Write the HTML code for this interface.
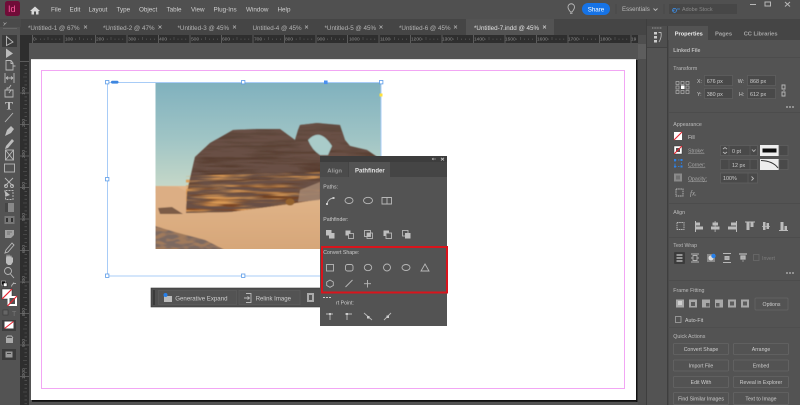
<!DOCTYPE html>
<html><head><meta charset="utf-8"><style>
html,body{margin:0;padding:0;width:800px;height:405px;overflow:hidden;background:#535353}
svg{display:block}
text{font-family:"Liberation Sans",sans-serif;font-size:5.2px;fill:#cdcdcd}
.m{font-size:6.3px;fill:#cfcfcf}
.t{font-size:6.25px;fill:#b4b4b4}
.d{fill:#a8a8a8}.c{text-anchor:middle}
.h{fill:#bcbcbc;font-size:5.3px}
.i{fill:none;stroke:#b8b8b8;stroke-width:.9}
.f{fill:#bcbcbc;stroke:none}
.r{font-size:4.8px;fill:#858585}
.fld{fill:#484848;stroke:#5f5f5f;stroke-width:.8}
.btn{fill:#535353;stroke:#666;stroke-width:.8}
.v{font-size:5.4px}
</style></head><body>
<svg width="800" height="405" viewBox="0 0 800 405" xmlns="http://www.w3.org/2000/svg">
<defs>
<linearGradient id="sky" x1="0" y1="0" x2="0" y2="1"><stop offset="0" stop-color="#80b1be"/><stop offset=".5" stop-color="#9fc4c5"/><stop offset=".95" stop-color="#c6d8c8"/></linearGradient>
<linearGradient id="rock" x1="0" y1="0" x2="0" y2="1"><stop offset="0" stop-color="#5f4a3f"/><stop offset=".55" stop-color="#563a2c"/><stop offset="1" stop-color="#86481f"/></linearGradient>
<linearGradient id="sand" x1="0" y1="0" x2="0" y2="1"><stop offset="0" stop-color="#e2b68b"/><stop offset="1" stop-color="#d6a679"/></linearGradient>
<pattern id="tk" width="31.5" height="8" patternUnits="userSpaceOnUse" x="32"><path d="M.5 0V8" stroke="#7a7a7a" stroke-width=".6"/><path d="M4.400 6.500V8M8.300 6.500V8M12.200 6.500V8M16 5V8M20 6.500V8M23.900 6.500V8M27.800 6.500V8" stroke="#5e5e5e" stroke-width=".6"/></pattern>
<pattern id="tkv" width="9" height="31.5" patternUnits="userSpaceOnUse" y="61"><path d="M0 .5H9" stroke="#7a7a7a" stroke-width=".6"/><path d="M6.500 4.400H9M6.500 8.300H9M6.500 12.200H9M5 16H9M6.500 20H9M6.500 23.900H9M6.500 27.800H9" stroke="#5e5e5e" stroke-width=".6"/></pattern>
<filter id="b" x="-5%" y="-5%" width="110%" height="110%"><feGaussianBlur stdDeviation=".45"/></filter>
<filter id="s"><feGaussianBlur stdDeviation=".28"/></filter>
<filter id="n1" x="0" y="0" width="100%" height="100%"><feTurbulence type="fractalNoise" baseFrequency="0.02 0.33" numOctaves="3" seed="4"/><feColorMatrix values="0 0 0 0 .14 0 0 0 0 .08 0 0 0 0 .06 4 0 0 0 -1.300"/></filter>
<filter id="n2" x="0" y="0" width="100%" height="100%"><feTurbulence type="fractalNoise" baseFrequency="0.025 0.28" numOctaves="2" seed="11"/><feColorMatrix values="0 0 0 0 .72 0 0 0 0 .33 0 0 0 0 .09 0 4 0 0 -1.500"/></filter>
<filter id="n3" x="0" y="0" width="100%" height="100%"><feTurbulence type="fractalNoise" baseFrequency="0.09 0.25" numOctaves="2" seed="7"/><feColorMatrix values="0 0 0 0 .2 0 0 0 0 .14 0 0 0 0 .12 5 0 0 0 -1.900"/></filter>
<clipPath id="rc"><path d="M186 213L187 192L192 170L195 157L210 143L233 130L257 129L280 129L295 140L298 130L300 125L317 123L340 125L345 140L350 146L367 150L382 160V190L340 196L290 204L230 212Z"/></clipPath>
<clipPath id="lo"><path d="M186 213V176L320 172V198L290 204L230 212Z"/></clipPath>
<clipPath id="pb"><path d="M155 250V226L175 232L205 240L225 250Z"/></clipPath>
</defs>

<rect width="800" height="405" fill="#535353"/>
<!-- top bar -->
<rect width="800" height="19" fill="#505050"/>
<rect y="19" width="646" height="16" fill="#454545"/>
<rect y="19" x="0" width="21" height="8" fill="#4a4a4a"/>

<!-- page -->
<rect x="31" y="59" width="605" height="341" fill="#fff"/>
<rect x="636" y="60" width="1.500" height="342" fill="#111"/>
<rect x="32" y="400" width="605" height="1.800" fill="#111"/>
<rect x="31" y="59" width="605" height=".8" fill="#ddd"/>
<rect x="41.500" y="70.500" width="583" height="318" fill="none" stroke="#f2a6f4" stroke-width="1"/>

<!-- photo -->
<svg x="155.500" y="83" width="225.500" height="166" viewBox="155.500 83 225.500 166">
<rect x="155" y="83" width="227" height="110" fill="url(#sky)"/>
<g filter="url(#b)">
<rect x="155" y="186" width="227" height="64" fill="url(#sand)"/>
<path d="M155 186L178 187L187 192V214L155 212Z" fill="#dcae84"/>
<path d="M186 213L187 192L192 170L195 157L210 143L233 130L257 129L280 129L295 140L298 130L300 125L317 123L340 125L345 140L350 146L367 150L382 160V190L340 196L290 204L230 212Z" fill="url(#rock)"/>
<g clip-path="url(#lo)"><rect x="186" y="172" width="136" height="42" fill="#000" filter="url(#n2)"/></g>
<g clip-path="url(#rc)"><rect x="186" y="123" width="196" height="92" fill="#000" filter="url(#n1)"/></g>
<path d="M308 140Q320 127 332 146L328 155H320Q312 150 308 140Z" fill="#a9cbc9"/>
<path d="M300 190L320 182L320 200L298 202Z" fill="#a88a74" opacity=".8"/>
<path d="M155 250V226L175 232L205 240L225 250Z" fill="#a07a5c"/>
<g clip-path="url(#pb)"><rect x="155" y="225" width="72" height="26" fill="#000" filter="url(#n3)"/></g>
<ellipse cx="290" cy="202" rx="4.500" ry="3.500" fill="#94622f"/>
<path d="M158 208L172 207L183 214H160Z" fill="#7b5c46"/>
</g>
</svg>

<!-- frame -->
<rect x="107.500" y="82.500" width="273.500" height="193.500" fill="none" stroke="#a8ccf7" stroke-width="1"/>
<g fill="#fff" stroke="#5a9be8" stroke-width=".8">
<rect x="105.500" y="80.500" width="3.400" height="3.400"/><rect x="241.500" y="80.500" width="3.400" height="3.400"/><rect x="379.500" y="80.500" width="3.400" height="3.400"/>
<rect x="105.500" y="177.500" width="3.400" height="3.400"/><rect x="105.500" y="274" width="3.400" height="3.400"/><rect x="241.500" y="274" width="3.400" height="3.400"/>
</g>
<rect x="324" y="80.500" width="3.600" height="3.600" fill="#4a90f0"/>
<rect x="379.500" y="93.500" width="3" height="3" fill="#ffe13a"/>
<rect x="111" y="80.800" width="7.500" height="2.800" rx="1.200" fill="#3d86e0"/>

<g filter="url(#s)">
<!-- logo & menu -->
<rect x="5" y="1" width="15" height="15" rx="2.500" fill="#6f0a38"/>
<text x="8" y="12" style="font-size:9px;fill:#ff5c9f">Id</text>
<path d="M30 11L35 6.500L40 11H38.500V14.500H36V11.500H34V14.500H31.500V11Z" fill="#d8d8d8"/>
<text class="m" x="51" y="11.500">File</text><text class="m" x="69.500" y="11.500">Edit</text><text class="m" x="88.500" y="11.500">Layout</text><text class="m" x="116.500" y="11.500">Type</text><text class="m" x="139" y="11.500">Object</text><text class="m" x="166.500" y="11.500">Table</text><text class="m" x="191" y="11.500">View</text><text class="m" x="213.500" y="11.500">Plug-Ins</text><text class="m" x="246" y="11.500">Window</text><text class="m" x="277.500" y="11.500">Help</text>
<!-- right of menu -->
<path d="M570.500 12C569 10 568 9 568 7A3.200 3.200 0 0 1 574.500 7C574.500 9 573.500 10 572 12ZM570 13.300H572.500" class="i" stroke-width=".8"/>
<rect x="582" y="3" width="28" height="12" rx="6" fill="#1473e6"/>
<text x="596" y="11.500" class="c" style="fill:#fff;font-size:6.200px">Share</text>
<path d="M616 4V14M664 4V14" stroke="#444" stroke-width=".7"/>
<text x="622" y="11" style="fill:#b8b8b8;font-size:6.100px">Essentials</text>
<path d="M653.500 8.500L655.500 10.500L657.500 8.500" class="i" stroke-width=".8"/>
<rect x="669" y="4" width="68" height="10" fill="#464646"/>
<path d="M676 9A2 2 0 1 1 675.900 8.900M672.500 11.500L674.500 9.800M677 9H680" fill="none" stroke="#3d8fe8" stroke-width=".8"/>
<text x="682" y="11" style="font-size:5.400px;fill:#8a8a8a">Adobe Stock</text>
<path d="M750 4.500H756" stroke="#b8b8b8" stroke-width="1"/>
<rect x="765" y="2" width="5.500" height="4" fill="none" stroke="#b8b8b8" stroke-width="1"/>
<path d="M785 2L790 6.500M790 2L785 6.500" stroke="#b8b8b8" stroke-width="1"/>

<!-- tabs -->
<rect x="466" y="19" width="88" height="16" fill="#535353"/>
<text class="t" x="28" y="30">*Untitled-1 @ 67%</text><path d="M84 25.500L87 28.500M87 25.500L84 28.500" stroke="#bbb" stroke-width=".6"/>
<text class="t" x="103" y="30">*Untitled-2 @ 47%</text><path d="M158.500 25.500L161.500 28.500M161.500 25.500L158.500 28.500" stroke="#bbb" stroke-width=".6"/>
<text class="t" x="177.500" y="30">*Untitled-3 @ 45%</text><path d="M233 25.500L236 28.500M236 25.500L233 28.500" stroke="#bbb" stroke-width=".6"/>
<text class="t" x="252.500" y="30">Untitled-4 @ 45%</text><path d="M305 25.500L308 28.500M308 25.500L305 28.500" stroke="#bbb" stroke-width=".6"/>
<text class="t" x="324.500" y="30">*Untitled-5 @ 45%</text><path d="M379.500 25.500L382.500 28.500M382.500 25.500L379.500 28.500" stroke="#bbb" stroke-width=".6"/>
<text class="t" x="399" y="30">*Untitled-6 @ 45%</text><path d="M454 25.500L457 28.500M457 25.500L454 28.500" stroke="#bbb" stroke-width=".6"/>
<text class="t" x="474" y="30" style="fill:#e2e2e2">*Untitled-7.indd @ 45%</text><path d="M543 25.500L546 28.500M546 25.500L543 28.500" stroke="#ddd" stroke-width=".6"/>
<path d="M3.500 22.500L5 24L3.500 25.500M6.500 22.500L5 24" fill="none" stroke="#aaa" stroke-width=".6"/>
<path d="M659 22.500H664M787 22.500H793" stroke="#aaa" stroke-width=".7"/>
</g>

<!-- rulers -->
<rect x="20" y="35" width="618" height="8" fill="#2e2e2e"/>
<rect x="32" y="35" width="606" height="8" fill="url(#tk)"/>
<rect x="20" y="43" width="9" height="362" fill="#2e2e2e"/>
<rect x="20" y="61" width="9" height="344" fill="url(#tkv)"/>
<g filter="url(#s)">
<text class="r" x="33" y="40.500">0</text><text class="r" x="65" y="40.500">100</text><text class="r" x="96" y="40.500">200</text><text class="r" x="128" y="40.500">300</text><text class="r" x="159" y="40.500">400</text><text class="r" x="191" y="40.500">500</text><text class="r" x="222" y="40.500">600</text><text class="r" x="254" y="40.500">700</text><text class="r" x="285" y="40.500">800</text><text class="r" x="317" y="40.500">900</text><text class="r" x="349" y="40.500">1000</text><text class="r" x="380" y="40.500">1100</text><text class="r" x="411" y="40.500">1200</text><text class="r" x="442" y="40.500">1300</text><text class="r" x="474" y="40.500">1400</text><text class="r" x="505" y="40.500">1500</text><text class="r" x="537" y="40.500">1600</text><text class="r" x="568" y="40.500">1700</text><text class="r" x="600" y="40.500">1800</text><text class="r" x="631" y="40.500">19</text>
</g>
<rect x="638" y="35" width="8" height="370" fill="#4e4e4e"/>
<rect x="638" y="44" width="8" height="15" fill="#5d5d5d"/>

<g filter="url(#s)">
<!-- toolbar -->
<rect x="0" y="27" width="20" height="378" fill="#535353"/>
<rect x="3" y="28" width="14" height="1" fill="#666"/>
<rect x="2" y="35" width="15" height="12" fill="#3b3b3b"/>
<path d="M6.500 36.500V45.500L13 42L6.500 36.500Z" class="i"/>
<path d="M6 48.500V58L13 53.500Z" class="f"/>
<path d="M6 60.500H11L13 63V70H6ZM11 61V63.500H13M13 66H15.500" class="i"/>
<path d="M5 73V83M14 73V83M6 78H13M6 78L8 76.500M6 78L8 79.500M13 78L11 76.500M13 78L11 79.500" class="i" stroke-width=".9"/>
<path d="M5 90H13V97H5ZM7 90V88H9L11 85M9 93L11 90" class="i" stroke-width="1.400"/>
<text x="5" y="109.500" style="font-size:12px;font-weight:bold;fill:#c0c0c0;font-family:'Liberation Serif',serif">T</text>
<path d="M5 122L13 113" class="i"/>
<path d="M5 136L7 130L11 126L14 129L11 133ZM5 136L9 131" class="f"/>
<path d="M5 149L6 146L12 139L14 141L8 148Z" class="f"/>
<rect x="5.500" y="150" width="8" height="10" class="i"/><path d="M5.500 150L13.500 160M13.500 150L5.500 160" class="i" stroke-width=".7"/>
<rect x="4.500" y="164" width="10" height="8" class="i"/>
<path d="M5 178L13 186M13 178L5 186" class="i"/><circle cx="6" cy="186" r="1.500" class="i"/><circle cx="12" cy="186" r="1.500" class="i"/>
<path d="M5.500 190.500H13V199.500H5.500Z" class="i" stroke-dasharray="2 1"/><path d="M4 190L10 195L6 196.500Z" class="f"/>
<rect x="5" y="203" width="9" height="9" fill="#888"/><rect x="5" y="203" width="3" height="9" fill="#444"/>
<rect x="4.500" y="216" width="10" height="8" fill="#777"/><path d="M6 218H8V222H6ZM11 218H13V222H11Z" fill="#333"/>
<path d="M5 230H14V235L11 238H5Z" fill="#a0a0a0"/><path d="M7 232H12M7 234H10" stroke="#444" stroke-width=".6"/>
<path d="M5 253L6 250L12 243L14 245L8 252Z" class="i"/>
<path d="M6 263V258L7 254L8 257L9 254L10 257L11 255L12 258L13 257V262L11 265H8Z" class="f"/>
<circle cx="8" cy="271" r="3.500" class="i"/><path d="M10.500 274L14 278" class="i" stroke-width="1.300"/>
<rect x="1.500" y="281" width="4" height="4" fill="#111" stroke="#ccc" stroke-width=".5"/><rect x="3.500" y="283" width="3.500" height="3.500" fill="#fff" stroke="#111" stroke-width=".5"/>
<path d="M11.500 286.500Q12 283 16 283.500M14 282.500L12 285" class="i" stroke-width=".8"/>
<rect x="2" y="289" width="10" height="10" fill="#fff" stroke="#222" stroke-width=".5"/><path d="M2 299L12 289" stroke="#e8222e" stroke-width="1.200"/>
<rect x="7.500" y="296" width="9.500" height="10" fill="#fff"/><rect x="9.500" y="298" width="5.500" height="6" fill="#535353"/><path d="M7.500 306L17 296" stroke="#e8222e" stroke-width="1.200"/>
<rect x="3" y="310" width="5" height="5" fill="#666" stroke="#333" stroke-width=".5"/><text x="12" y="316" style="font-size:7px;fill:#777">T</text>
<rect x="2" y="320" width="14" height="11" fill="#3d3d3d"/><rect x="4.500" y="321.500" width="9" height="7" fill="#fff"/><path d="M4.500 328.500L13.500 321.500" stroke="#e8222e" stroke-width="1.100"/>
<rect x="6" y="338" width="7" height="5" fill="#aaa"/><path d="M6 338L7.500 336H11.500L13 338" class="i" stroke-width=".7"/>
<rect x="2" y="349" width="14" height="11" fill="#3a3a3a"/><rect x="5.500" y="351.500" width="7" height="6" fill="#999"/><rect x="7" y="353" width="4" height="1" fill="#444"/>
<!-- vertical ruler numbers -->
<text class="r" transform="rotate(-90 25 95)" x="25" y="95">100</text><text class="r" transform="rotate(-90 25 127)" x="25" y="127">200</text><text class="r" transform="rotate(-90 25 158)" x="25" y="158">300</text><text class="r" transform="rotate(-90 25 190)" x="25" y="190">400</text><text class="r" transform="rotate(-90 25 221)" x="25" y="221">500</text><text class="r" transform="rotate(-90 25 253)" x="25" y="253">600</text><text class="r" transform="rotate(-90 25 284)" x="25" y="284">700</text><text class="r" transform="rotate(-90 25 316)" x="25" y="316">800</text><text class="r" transform="rotate(-90 25 347)" x="25" y="347">900</text><text class="r" transform="rotate(-90 25 379)" x="25" y="379">1000</text>
</g>

<!-- floating context bar -->
<rect x="151" y="288" width="172" height="19" fill="#4f4f4f" stroke="#3a3a3a" stroke-width=".6"/>
<rect x="153" y="290" width="2" height="15" fill="#3a3a3a"/>
<rect x="158.500" y="290.500" width="78" height="14" fill="#535353" stroke="#5c5c5c" stroke-width=".8"/>
<rect x="239" y="290.500" width="61" height="14" fill="#535353" stroke="#5c5c5c" stroke-width=".8"/>
<g filter="url(#s)">
<rect x="164" y="296" width="8" height="6" fill="#bbb"/><circle cx="165.500" cy="295" r="2" fill="#2680eb"/>
<text x="175.300" y="300.300" style="font-size:6.100px">Generative Expand</text>
<path d="M246 293.500H251V302.500H246M244 298H249M247.500 296.500L249.500 298L247.500 299.500" class="i" stroke-width=".9"/>
<text x="255.700" y="300.300" style="font-size:6.050px">Relink Image</text>
<rect x="307" y="293" width="7" height="9" fill="#aaa"/><rect x="309" y="295" width="3" height="5" fill="#555"/>
</g>

<!-- Pathfinder panel -->
<rect x="320" y="156" width="127" height="170" fill="#535353"/>
<rect x="320" y="156" width="127" height="6.500" fill="#3d3d3d"/>
<rect x="320" y="162" width="127" height="15" fill="#454545"/>
<rect x="320" y="162" width="28" height="15" fill="#4b4b4b"/>
<rect x="349" y="162" width="41" height="15" fill="#535353"/>
<g filter="url(#s)">
<path d="M432 159H436M432 159L433.500 158M432 159L433.500 160" stroke="#bbb" stroke-width=".6"/>
<path d="M441 157.800L444 160.500M444 157.800L441 160.500" stroke="#ccc" stroke-width=".8"/>
<text x="327.300" y="172.500" style="fill:#9c9c9c;font-weight:bold;font-size:5.900px">Align</text>
<text x="355" y="172.500" style="fill:#e2e2e2;font-weight:bold;font-size:6px">Pathfinder</text>
<text x="323.300" y="188.500">Paths:</text>
<text x="323.300" y="221">Pathfinder:</text>
<text x="323.300" y="254">Convert Shape:</text>
<text x="336" y="304.500">rt Point:</text>
<!-- paths -->
<path d="M327 204Q328 199 333 198" class="i"/><rect x="326" y="203" width="2" height="2" fill="#ccc"/><rect x="332.500" y="197" width="2" height="2" fill="#ccc"/>
<ellipse cx="349" cy="200.500" rx="4" ry="3" class="i"/>
<ellipse cx="368" cy="200.500" rx="4.500" ry="3.200" class="i"/>
<path d="M382 197.500H387V204H382ZM387 197.500H391.500V204H387" class="i" stroke-width=".9"/>
<!-- pathfinder -->
<rect x="326" y="230" width="5.500" height="5.500" fill="#c0c0c0"/><rect x="329" y="233" width="5.500" height="5.500" fill="#c0c0c0"/>
<rect x="345.500" y="230.500" width="5" height="5" fill="#c0c0c0"/><rect x="348.500" y="233.500" width="5" height="5" fill="#535353" stroke="#c0c0c0" stroke-width=".8"/>
<rect x="364.500" y="230.500" width="6" height="6" class="i" stroke-width=".8"/><rect x="367" y="233" width="5.500" height="5.500" fill="none" stroke="#c0c0c0" stroke-width=".8"/><rect x="367" y="233" width="3.500" height="3.500" fill="#c0c0c0"/>
<rect x="383.500" y="230.500" width="5.500" height="5.500" fill="#c0c0c0"/><rect x="386" y="233" width="3" height="3" fill="#535353"/><rect x="386" y="233" width="5.500" height="5.500" class="i" stroke-width=".8"/>
<rect x="402.500" y="230.500" width="5.500" height="5.500" class="i" stroke-width=".8"/><rect x="405" y="233" width="5.500" height="5.500" fill="#c0c0c0"/>
<!-- convert -->
<rect x="326.500" y="264.500" width="7" height="6.500" class="i" stroke-width=".7"/>
<rect x="345.500" y="264.500" width="7.500" height="6.500" rx="2" class="i" stroke-width=".7"/>
<ellipse cx="368" cy="267.500" rx="3.700" ry="3.200" class="i" stroke-width=".7"/>
<circle cx="387" cy="267.500" r="3.500" class="i" stroke-width=".7"/>
<ellipse cx="406" cy="267.500" rx="4" ry="3" class="i" stroke-width=".7"/>
<path d="M425 264L429 271H421Z" class="i" stroke-width=".7"/>
<path d="M330 280L333.300 282V285.500L330 287.300L326.700 285.500V282Z" class="i" stroke-width=".7"/>
<path d="M345.500 287L352.500 280" class="i" stroke-width=".7"/>
<path d="M367.500 280V287.500M364 283.700H371" class="i" stroke-width=".7"/>
<path d="M323 297.500H325M326 297.500H328M329 297.500H331" stroke="#ccc" stroke-width=".9"/>
<!-- convert point -->
<path d="M326 314H333M330 314V320" class="i" stroke-width=".9"/><rect x="329" y="313" width="2" height="2" fill="#ccc"/>
<path d="M345 314H352M347 314V320" class="i" stroke-width=".9"/><rect x="346" y="313" width="2" height="2" fill="#ccc"/>
<path d="M364 313L372 320" class="i" stroke-width="1.200"/><rect x="367" y="316" width="2.500" height="2.500" fill="#ccc"/>
<path d="M384 320L391 313" class="i" stroke-width="1.200"/><rect x="386.500" y="315.500" width="2.500" height="2.500" fill="#ccc"/>
</g>
<rect x="322" y="247" width="125" height="45.500" fill="none" stroke="#d9141c" stroke-width="2"/>

<!-- right panels -->
<rect x="646" y="19" width="154" height="386" fill="#535353"/>
<rect x="646" y="19" width="154" height="7" fill="#454545"/>
<rect x="646" y="19" width="1" height="386" fill="#3e3e3e"/>
<rect x="667" y="26" width="1.400" height="379" fill="#3e3e3e"/>
<rect x="647" y="26" width="20" height="21" fill="#4e4e4e"/>
<rect x="647" y="47" width="20" height=".8" fill="#3e3e3e"/>
<rect x="668" y="26" width="132" height="14" fill="#454545"/>
<rect x="668" y="26" width="40" height="14" fill="#535353"/>
<g filter="url(#s)">
<path d="M652 28H662" stroke="#999" stroke-width="1" stroke-dasharray="1 .6"/>
<rect x="654" y="32" width="3" height="2.500" fill="#ccc"/><rect x="654" y="36" width="3" height="2.500" fill="#ccc"/><rect x="654" y="40" width="3" height="2.500" fill="#ccc"/>
<path d="M658.500 32.500H661Q662 37 659 42" class="i" stroke-width=".9"/>
<text x="674.700" y="35.500" style="fill:#ececec;font-weight:bold;font-size:5.700px">Properties</text>
<text x="715" y="35.500" style="fill:#a6a6a6;font-weight:bold;font-size:5.800px">Pages</text>
<text x="743.700" y="35.500" style="fill:#a6a6a6;font-weight:bold;font-size:5.700px">CC Libraries</text>
<text x="673.300" y="52" style="font-weight:bold;fill:#bdbdbd">Linked File</text>
<text class="h" x="673.300" y="70">Transform</text>
<g fill="none" stroke="#b0b0b0" stroke-width=".7"><rect x="676" y="81.500" width="3" height="3"/><rect x="681" y="81.500" width="3" height="3"/><rect x="686" y="81.500" width="3" height="3"/><rect x="676" y="86" width="3" height="3"/><rect x="686" y="86" width="3" height="3"/><rect x="676" y="90.500" width="3" height="3"/><rect x="681" y="90.500" width="3" height="3"/><rect x="686" y="90.500" width="3" height="3"/></g>
<rect x="681" y="85.500" width="3.500" height="3.500" fill="#fff"/>
<rect x="704.500" y="75.500" width="28" height="10" class="fld"/><rect x="747.500" y="75.500" width="28" height="10" class="fld"/><rect x="704.500" y="88.500" width="28" height="10" class="fld"/><rect x="747.500" y="88.500" width="28" height="10" class="fld"/>
<text x="697" y="83">X:</text><text x="737.700" y="83">W:</text><text x="697" y="96">Y:</text><text x="739" y="96">H:</text>
<text class="v" x="706.700" y="82.800">676 px</text><text class="v" x="750" y="82.800">868 px</text><text class="v" x="706.700" y="95.800">380 px</text><text class="v" x="750" y="95.800">612 px</text>
<path d="M782 85H785V89H782ZM784 90V91M782 92H785V96H782Z" class="i" stroke-width=".8"/>
<path d="M786 107H788M789 107H791M792 107H794" stroke="#ccc" stroke-width="1"/>
<rect x="668" y="57" width="132" height=".7" fill="#4a4a4a"/><rect x="668" y="112" width="132" height=".7" fill="#4a4a4a"/>
<text class="h" x="673.300" y="126">Appearance</text>
<rect x="674" y="132" width="8" height="8" fill="#fff"/><path d="M674 140L682 132" stroke="#e8222e" stroke-width="1.100"/>
<text x="688" y="139">Fill</text>
<rect x="674" y="146" width="8" height="8" fill="#fff" stroke="#222" stroke-width=".4"/><rect x="676" y="148" width="4" height="4" fill="#535353"/><path d="M674 154L682 146" stroke="#e8222e" stroke-width="1.100"/>
<text x="688" y="152.500" class="d" style="text-decoration:underline">Stroke:</text>
<rect x="720.500" y="145.500" width="37" height="10" class="fld"/><path d="M729 145.500V155.500M750 145.500V155.500" stroke="#5f5f5f" stroke-width=".7"/>
<path d="M723 149L725 147.500L727 149M723 152L725 153.500L727 152M723 163L725 161.500L727 163M723 166L725 167.500L727 166" class="i" stroke-width=".6"/>
<text class="v" x="732" y="152.800">0 pt</text>
<path d="M752 149.500L753.800 151.500L755.600 149.500M781.500 149.500L783.400 151.500L785.300 149.500M781.500 163.500L783.400 165.500L785.300 163.500" class="i" stroke-width=".7"/>
<rect x="760" y="145" width="19" height="11" fill="#eee"/><rect x="762.500" y="148.500" width="14" height="4" fill="#111"/>
<rect x="779" y="145.500" width="9" height="10" class="fld"/>
<rect x="675" y="160" width="6.500" height="6.500" fill="none" stroke="#2d82e8" stroke-width=".8" stroke-dasharray="1.500 1.500"/>
<rect x="674" y="159" width="2" height="2" fill="#2d82e8"/><rect x="680.500" y="159" width="2" height="2" fill="#2d82e8"/><rect x="674" y="165.500" width="2" height="2" fill="#2d82e8"/><rect x="680.500" y="165.500" width="2" height="2" fill="#2d82e8"/>
<text x="688" y="166.500" class="d" style="text-decoration:underline">Corner:</text>
<rect x="720.500" y="159.500" width="37" height="10" class="fld"/><path d="M729 159.500V169.500M750 159.500V169.500" stroke="#5f5f5f" stroke-width=".7"/>
<text class="v" x="732" y="166.800">12 px</text>
<rect x="760" y="159" width="19" height="11" fill="#eee"/><path d="M761 160.500Q773 161 778 168" fill="none" stroke="#333" stroke-width=".9"/>
<rect x="779" y="159.500" width="9" height="10" class="fld"/>
<rect x="674" y="173.500" width="8" height="8" fill="#8a8a8a"/><rect x="676" y="175.500" width="4" height="4" fill="#6f6f6f"/>
<text x="688" y="180.500" class="d" style="text-decoration:underline">Opacity:</text>
<rect x="720.500" y="173" width="37" height="10" class="fld"/><path d="M748 173V183" stroke="#5f5f5f" stroke-width=".7"/>
<text class="v" x="723" y="180">100%</text>
<path d="M751.500 176.500L753.500 178.500L751.500 180.500" class="i" stroke-width=".7"/>
<rect x="676" y="189" width="7" height="7" class="i" stroke-width=".8" stroke-dasharray="1.500 .7"/>
<text x="690" y="195.500" style="font-family:'Liberation Serif',serif;font-style:italic;font-size:7px;fill:#b0b0b0">fx.</text>
<rect x="668" y="203" width="132" height=".7" fill="#4a4a4a"/>
<text class="h" x="673.300" y="214">Align</text>
<rect x="677" y="222.500" width="7" height="7" class="i" stroke-width=".8" stroke-dasharray="1.500 .7"/>
<g fill="#bcbcbc">
<path d="M695 221H696V232H695ZM696 222.500H700V225.500H696ZM696 226.500H703V229.500H696Z"/>
<path d="M714.700 221H715.500V232H714.700ZM712.500 222.500H718V225.500H712.500ZM711 226.500H719.500V229.500H711Z"/>
<path d="M736 221H737V232H736ZM731 222.500H736V225.500H731ZM728 226.500H736V229.500H728Z"/>
<path d="M745 221.500H755V222.500H745ZM746.500 222.500H749.500V230H746.500ZM750.500 222.500H753.500V227H750.500Z"/>
<path d="M762 226H770V226.800H762ZM763 222H765.500V230H763ZM766.500 223H769V229H766.500Z"/>
<path d="M779 230H788V231H779ZM780.500 222H783.500V230H780.500ZM784.500 226H787V230H784.500Z"/>
</g>
<rect x="668" y="237" width="132" height=".7" fill="#4a4a4a"/>
<text class="h" x="673.300" y="247">Text Wrap</text>
<rect x="674.500" y="252.500" width="10" height="11" fill="#3a3a3a" stroke="#333" stroke-width=".5"/>
<path d="M676.500 255H682.500M676.500 258H682.500M676.500 261H682.500" stroke="#ccc" stroke-width="1.300"/>
<path d="M691 254H699M691 262H699M691 258H692.500M697.500 258H699M693 255.500H697V260.500H693Z" fill="none" stroke="#b0b0b0" stroke-width=".9"/>
<rect x="707" y="254" width="8" height="8" fill="#888"/><circle cx="711" cy="258" r="2.500" fill="#ddd"/><circle cx="713.500" cy="256" r="2.200" fill="#2680eb"/>
<path d="M723 253.500H731M723 262.500H731M725 256.500H729V259.500H725Z" stroke="#b8b8b8" stroke-width="1" fill="#aaa"/>
<path d="M739 254H747M741 256H745V259H741ZM742.500 261H743.500" stroke="#b8b8b8" stroke-width="1.300" fill="#aaa"/>
<rect x="753.500" y="254.500" width="5.500" height="6" fill="none" stroke="#6d6d6d" stroke-width=".7"/>
<text x="762" y="260" style="fill:#7d7d7d">Invert</text>
<path d="M786 273H788M789 273H791M792 273H794" stroke="#ccc" stroke-width="1"/>
<rect x="668" y="280" width="132" height=".7" fill="#4a4a4a"/>
<text class="h" x="673.300" y="292">Frame Fitting</text>
<g fill="#a8a8a8">
<rect x="676" y="299.500" width="8" height="8"/><rect x="689" y="299.500" width="8" height="8"/><rect x="702" y="299.500" width="8" height="8"/><rect x="715" y="299.500" width="8" height="8"/><rect x="728" y="299.500" width="8" height="8"/><rect x="741" y="299.500" width="8" height="8"/></g>
<g fill="#5b5b5b"><rect x="678" y="301" width="4" height="4" fill="#cfcfcf"/><rect x="691" y="302" width="4" height="4"/><rect x="706" y="303" width="3.500" height="3.500"/><rect x="716" y="303" width="3.500" height="3.500"/><rect x="730" y="301.500" width="4" height="4"/><rect x="743" y="301.500" width="4" height="4"/></g>
<rect x="755" y="298" width="33" height="12" rx="1" class="btn"/><text x="771.500" y="305.800" class="c">Options</text>
<rect x="675.500" y="316.500" width="5.500" height="6" fill="none" stroke="#b0b0b0" stroke-width=".7"/>
<text x="685" y="321.800">Auto-Fit</text>
<rect x="668" y="327" width="132" height=".7" fill="#4d4d4d"/>
<text class="h" x="673.300" y="338">Quick Actions</text>
<rect x="673.500" y="343.500" width="55" height="11" rx="1" class="btn"/><rect x="733.500" y="343.500" width="55" height="11" rx="1" class="btn"/>
<rect x="673.500" y="360" width="55" height="11" rx="1" class="btn"/><rect x="733.500" y="360" width="55" height="11" rx="1" class="btn"/>
<rect x="673.500" y="376.500" width="55" height="11" rx="1" class="btn"/><rect x="733.500" y="376.500" width="55" height="11" rx="1" class="btn"/>
<rect x="673.500" y="392.500" width="55" height="12" rx="1" class="btn"/><rect x="733.500" y="392.500" width="55" height="12" rx="1" class="btn"/>
<text x="701" y="351" class="c">Convert Shape</text><text x="761" y="351" class="c">Arrange</text>
<text x="701" y="367.500" class="c">Import File</text><text x="761" y="367.500" class="c">Embed</text>
<text x="701" y="384" class="c">Edit With</text><text x="761" y="384" class="c">Reveal in Explorer</text>
<text x="701" y="400.300" class="c">Find Similar Images</text><text x="761" y="400.300" class="c">Text to Image</text>
</g>
</svg>
</body></html>
